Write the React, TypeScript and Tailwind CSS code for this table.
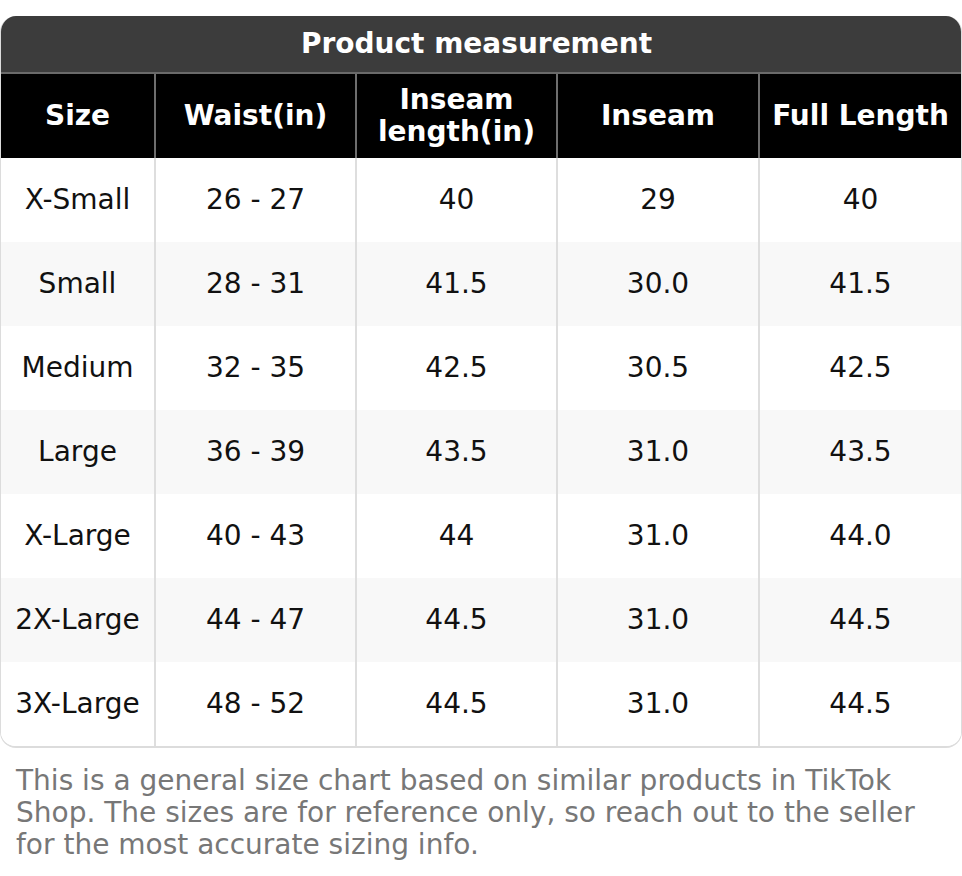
import React from "react";

const headers = ["Size", "Waist(in)", "Inseam length(in)", "Inseam", "Full Length"];

const rows = [
  ["X-Small", "26 - 27", "40", "29", "40"],
  ["Small", "28 - 31", "41.5", "30.0", "41.5"],
  ["Medium", "32 - 35", "42.5", "30.5", "42.5"],
  ["Large", "36 - 39", "43.5", "31.0", "43.5"],
  ["X-Large", "40 - 43", "44", "31.0", "44.0"],
  ["2X-Large", "44 - 47", "44.5", "31.0", "44.5"],
  ["3X-Large", "48 - 52", "44.5", "31.0", "44.5"],
];

const cols = "grid grid-cols-[155px_201px_201px_202px_1fr]";

export default function App() {
  return (
    <div className="min-h-screen bg-white pt-4 font-['DejaVu_Sans',sans-serif] text-[28px]">
      <div className="overflow-hidden rounded-2xl border-x border-b-2 border-[#dcdcdc]">
        <div className="flex h-[58px] items-center justify-center border-b-2 border-[#6a6a6a] bg-[#3c3c3c] pr-[9px] font-bold text-white">
          Product measurement
        </div>
        <div className={`${cols} h-[84px] bg-black font-bold leading-[32px] text-white`}>
          {headers.map((h, i) => (
            <div
              key={h}
              className={`flex items-center justify-center px-1 text-center ${
                i < headers.length - 1 ? "border-r-2 border-[#6e6e6e]" : ""
              }`}
            >
              {h === "Inseam length(in)" ? (
                <span>
                  Inseam
                  <br />
                  length(in)
                </span>
              ) : (
                h
              )}
            </div>
          ))}
        </div>
        {rows.map((row, r) => (
          <div
            key={row[0]}
            className={`${cols} h-[84px] text-[#111] ${r % 2 === 1 ? "bg-[#f8f8f8]" : "bg-white"}`}
          >
            {row.map((cell, i) => (
              <div
                key={i}
                className={`flex items-center justify-center whitespace-nowrap ${
                  i < row.length - 1 ? "border-r-2 border-[#dedede]" : ""
                }`}
              >
                {cell}
              </div>
            ))}
          </div>
        ))}
      </div>
      <p className="px-4 pt-[17px] leading-[32px] text-[#777]">
        This is a general size chart based on similar products in TikTok Shop. The sizes are for
        reference only, so reach out to the seller for the most accurate sizing info.
      </p>
    </div>
  );
}
